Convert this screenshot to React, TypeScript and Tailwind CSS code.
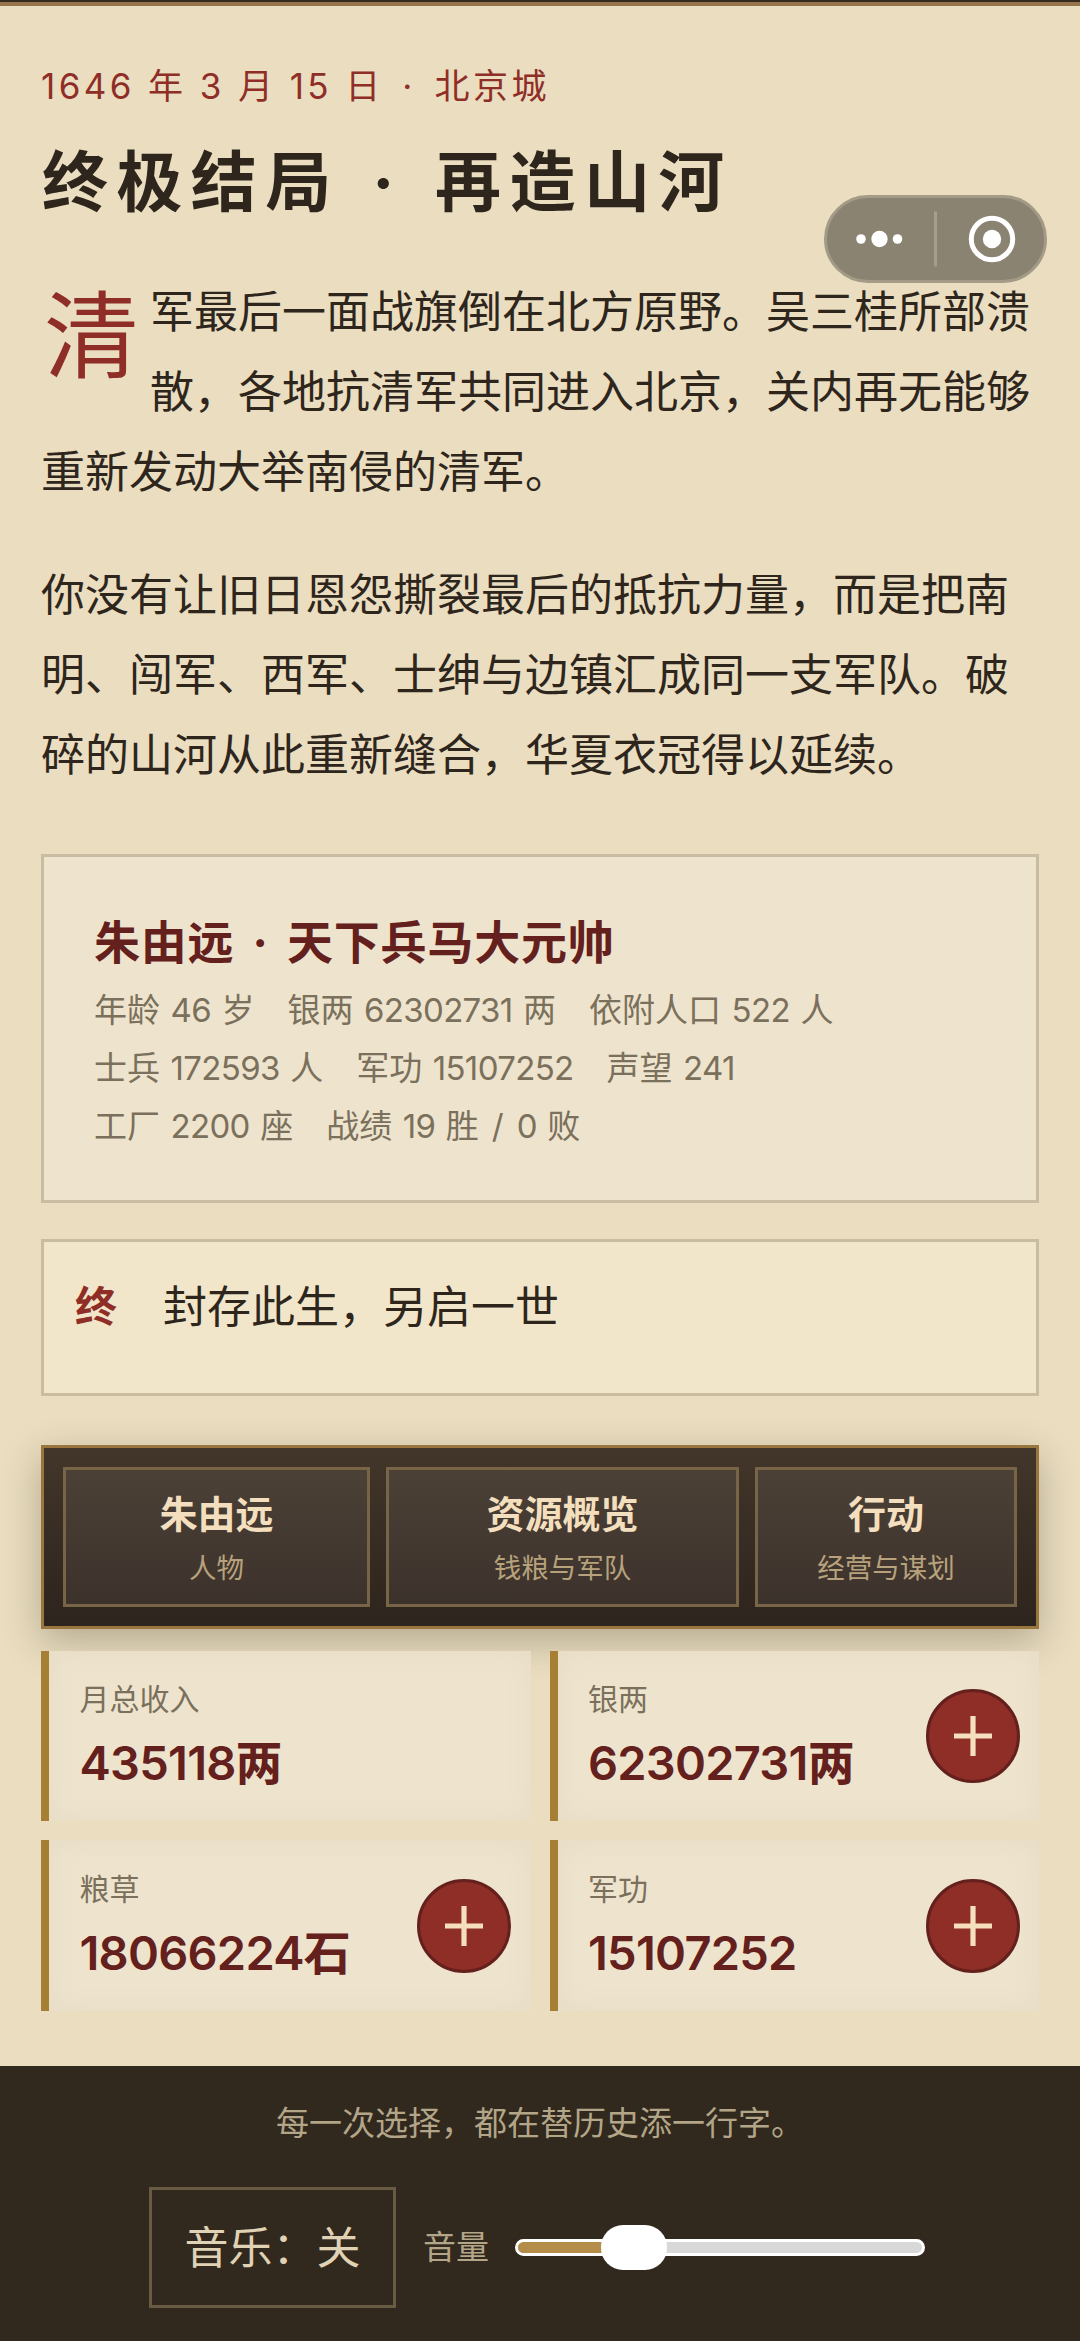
import React from "react";
import { clsx } from "clsx";

type Resource = {
  label: string;
  value: string;
  unit?: string;
  canAdd: boolean;
};

const stats = [
  "年龄 46 岁　银两 62302731 两　依附人口 522 人",
  "士兵 172593 人　军功 15107252　声望 241",
  "工厂 2200 座　战绩 19 胜 / 0 败",
];

const tabs = [
  { title: "朱由远", sub: "人物", width: "w-[307px]" },
  { title: "资源概览", sub: "钱粮与军队", width: "w-[353px]" },
  { title: "行动", sub: "经营与谋划", width: "w-[262px]" },
];

const resources: Resource[] = [
  { label: "月总收入", value: "435118", unit: "两", canAdd: false },
  { label: "银两", value: "62302731", unit: "两", canAdd: true },
  { label: "粮草", value: "18066224", unit: "石", canAdd: true },
  { label: "军功", value: "15107252", canAdd: true },
];

const Capsule = () => (
  <div className="absolute left-[824px] top-[195px] flex h-[88px] w-[223px] items-center rounded-full border-[3px] border-[#a39b86] bg-[#8b8371]">
    <svg width="217" height="82" viewBox="0 0 217 82" fill="#fff">
      <circle cx="34" cy="41" r="4.8" />
      <circle cx="52.5" cy="41" r="8.2" />
      <circle cx="70.5" cy="41" r="4.8" />
      <rect x="107" y="13.5" width="3" height="55" fill="#a69e8b" />
      <circle cx="165" cy="41" r="20.7" fill="none" stroke="#fff" strokeWidth="5" />
      <circle cx="165" cy="41" r="9.2" />
    </svg>
  </div>
);

// digits are set slightly tighter than the characters around them
const StatLine = ({ text }: { text: string }) => (
  <p className="whitespace-nowrap [word-spacing:1.2px]">
    {text.split(/(\d+|\/)/).map((part, index) => (
      <span
        key={index}
        className={clsx(/^\d+$/.test(part) && "tracking-[-0.65px]", part === "/" && "mx-[2.5px]")}
      >
        {part}
      </span>
    ))}
  </p>
);

const ResourceCard = ({ item }: { item: Resource }) => (
  <div className="flex h-[170.5px] items-center justify-between border-l-8 border-[#a67f35] bg-[#eee4ce] pl-[30.5px] pr-[19.5px] shadow-[inset_0_0_28px_rgba(150,120,90,0.08)]">
    <div className="pb-[3px]">
      <div className="text-[30px] leading-[42px] text-[#7b705c]">{item.label}</div>
      <div className="mt-[15px] flex text-[47px] font-semibold leading-[56px] text-[#64201c]">
        <span className="tracking-[-0.75px]">{item.value}</span>
        {item.unit && <span>{item.unit}</span>}
      </div>
    </div>
    {item.canAdd && (
      <button className="flex size-[94px] items-center justify-center rounded-full border-[3px] border-[#64201c] bg-[#8f2e27]">
        <svg width="40" height="40" viewBox="0 0 40 40" stroke="#f6dfbc" strokeWidth="5.2">
          <path d="M20 0v40M1 20h38" />
        </svg>
      </button>
    )}
  </div>
);

const App = () => {
  return (
    <div className="relative flex h-[2341px] w-[1080px] flex-col overflow-hidden bg-[#eaddc0] font-['Inter','Noto_Sans_CJK_SC',sans-serif] text-[#2e261c]">
      <div className="h-[6px] shrink-0 border-b-4 border-[#96734a] bg-[#34291f]" />
      <Capsule />

      <main className="h-[2060px] shrink-0 px-[41px]">
        <div className="pt-[54px] text-[35px] leading-[52px] tracking-[3.4px] text-[#8f2e27]">
          1646 年 3 月 15 日 <span className="mx-[5.5px]">·</span> 北京城
        </div>
        <h1 className="mt-[25px] pl-px text-[66px] font-bold leading-[90px] tracking-[8.4px]">
          终极结局 <span className="mx-[8.5px]">·</span> 再造山河
        </h1>

        <div className="mt-[46px] text-[44px] leading-[79.8px]">
          <p className="first-letter:float-left first-letter:ml-[3px] first-letter:mr-[11px] first-letter:text-[95px] first-letter:leading-[127px] first-letter:text-[#8f2e27]">
            清军最后一面战旗倒在北方原野。吴三桂所部溃散，各地抗清军共同进入北京，关内再无能够重新发动大举南侵的清军。
          </p>
          <p className="mt-[44px] w-[980px]">
            你没有让旧日恩怨撕裂最后的抵抗力量，而是把南明、闯军、西军、士绅与边镇汇成同一支军队。破碎的山河从此重新缝合，华夏衣冠得以延续。
          </p>
        </div>

        <section className="mt-[58.2px] h-[349px] border-[3px] border-[#c8bca3] bg-[#eee4ce] px-[50px] pt-[52px]">
          <h2 className="text-[46px] font-bold leading-[66px] tracking-[0.8px] text-[#64201c]">
            朱由远 <span className="mx-[6.5px]">·</span> 天下兵马大元帅
          </h2>
          <div className="mt-[7px] text-[33px] leading-[57.8px] text-[#7b705c]">
            {stats.map((line) => (
              <StatLine key={line} text={line} />
            ))}
          </div>
        </section>

        <button className="mt-[36px] flex h-[157px] w-full border-[3px] border-[#cabd9f] bg-[#f1e6ca] px-[31px] pt-[33px] text-left text-[44px] leading-[64px]">
          <span className="w-[88px] text-[42px] font-bold text-[#8f2e27]">终</span>
          <span>封存此生，另启一世</span>
        </button>

        <nav className="mt-[49px] flex h-[184px] gap-[16px] border-[3px] border-[#98763e] bg-linear-to-b from-[#43362a] to-[#2d241d] pl-[19px] pt-[19px] shadow-[0_12px_36px_rgba(56,50,28,0.3)]">
          {tabs.map((tab) => (
            <button
              key={tab.title}
              className={clsx(
                "flex h-[140px] shrink-0 flex-col items-center border-[3px] border-[#786548] bg-linear-to-b from-[#4c4136] to-[#3c322c]",
                tab.width
              )}
            >
              <span className="mt-[17px] text-[38px] font-bold leading-[54px] text-[#f3dfbd]">{tab.title}</span>
              <span className="mt-[7px] text-[27.5px] leading-[40px] text-[#b8a27c]">{tab.sub}</span>
            </button>
          ))}
        </nav>

        <div className="mt-[22px] grid grid-cols-2 gap-x-[19px] gap-y-[19px]">
          {resources.map((item) => (
            <ResourceCard key={item.label} item={item} />
          ))}
        </div>
      </main>

      <footer className="flex-1 bg-[#31281e] pt-[33px]">
        <p className="text-center text-[33px] leading-[48px] text-[#b3a587]">每一次选择，都在替历史添一行字。</p>
        <div className="mt-[40px] flex items-center pl-[149px]">
          <button className="h-[121px] w-[247px] border-[3px] border-[#695a43] text-[44px] text-[#e0d2b4]">
            音乐：关
          </button>
          <span className="ml-[27px] text-[33px] text-[#b3a587]">音量</span>
          <div className="relative ml-[26px] h-[17px] w-[410px] rounded-full border-[3px] border-white bg-[#d8d8d8]">
            <div className="h-full w-[110px] rounded-full bg-[#b48d4a]" />
            <div className="absolute left-[83px] top-[-17px] h-[45px] w-[66px] rounded-[22px] bg-white" />
          </div>
        </div>
      </footer>
    </div>
  );
};

export default App;
